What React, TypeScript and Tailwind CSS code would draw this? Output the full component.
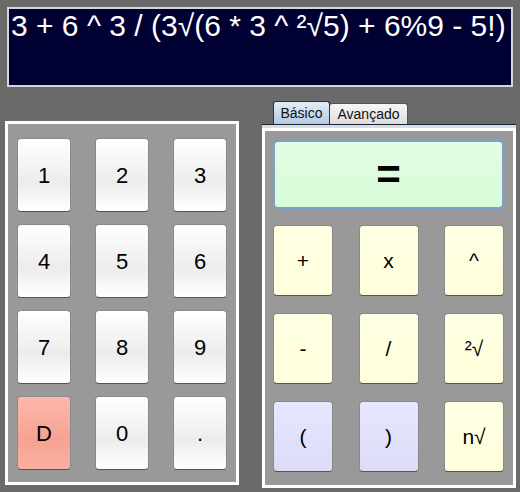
const digits = ["1", "2", "3", "4", "5", "6", "7", "8", "9", "D", "0", "."];

const ops = [
  { label: "+", kind: "y" },
  { label: "x", kind: "y" },
  { label: "^", kind: "y" },
  { label: "-", kind: "y" },
  { label: "/", kind: "y" },
  { label: "²√", kind: "y" },
  { label: "(", kind: "p" },
  { label: ")", kind: "p" },
  { label: "n√", kind: "y" },
];

const DigitKey = ({ label }: { label: string }) => (
  <div
    className={
      label === "D"
        ? "flex items-center justify-center rounded-[4px] border border-[#8a8a8a] border-b-[#555] bg-[linear-gradient(to_bottom,#fcb8ab,#f5a292_60%,#fbb0a2)] text-[22px] text-black"
        : "flex items-center justify-center rounded-[4px] border border-[#8a8a8a] border-b-[#555] bg-[linear-gradient(to_bottom,#ffffff,#ececec_60%,#ffffff)] text-[22px] text-black"
    }
  >
    {label}
  </div>
);

const OpKey = ({ label, kind }: { label: string; kind: string }) => (
  <div
    className={
      kind === "p"
        ? "flex items-center justify-center rounded-[4px] border border-[#8a8a8a] border-b-[#555] bg-[linear-gradient(to_bottom,#e6e6ff,#dcdcf8)] text-[21px] text-black"
        : "flex items-center justify-center rounded-[4px] border border-[#8a8a8a] border-b-[#555] bg-[linear-gradient(to_bottom,#ffffe4,#ffffdc)] text-[21px] text-black"
    }
  >
    {label}
  </div>
);

export default function App() {
  return (
    <div className="w-[520px] h-[492px] overflow-hidden bg-[#6a6a6a] pt-[7px] font-['Liberation_Sans',Arial,sans-serif]">
      {/* expression display */}
      <div className="mx-[7px] h-[80px] border-2 border-[#d6d6d6] bg-[#000033] px-[2px] text-[30px] leading-[34px] text-white whitespace-nowrap overflow-hidden">
        3 + 6 ^ 3 / (3√(6 * 3 ^ ²√5) + 6%9 - 5!)
      </div>

      <div className="flex items-start">
        {/* number pad */}
        <div className="ml-[5px] mt-[34px] h-[364px] w-[234px] border-[3px] border-white bg-[#999999] pl-[9px] pt-[14px]">
          <div className="grid grid-cols-[54px_54px_54px] grid-rows-[74px_74px_74px_74px] gap-x-[24px] gap-y-[12px]">
            {digits.map((d) => (
              <DigitKey key={d} label={d} />
            ))}
          </div>
        </div>

        {/* tabbed operators */}
        <div className="ml-[23px] mt-[14px] w-[254px]">
          <div className="flex items-end pl-[11px] h-[23px] text-[14px] leading-none">
            <div className="h-[23px] w-[57px] rounded-t-[3px] border border-b-0 border-[#333] bg-[linear-gradient(to_bottom,#e2ecf6,#b2cae2)] flex items-center justify-center text-[#111]">
              Básico
            </div>
            <div className="h-[21px] w-[78px] rounded-t-[3px] border border-b-0 border-l-0 border-[#555] bg-[linear-gradient(to_bottom,#f6f6f6,#dcdcdc)] flex items-center justify-center text-[#111]">
              Avançado
            </div>
          </div>
          <div className="h-px bg-[#222]" />
          <div className="h-[3px] bg-[#cfe0f0]" />
          <div className="h-[360px] border-[3px] border-white bg-[#999999] pl-[8px] pr-[9px] pt-[9px]">
            <div className="flex h-[69px] items-center justify-center rounded-[5px] border-2 border-[#7aa0d0] bg-[linear-gradient(to_bottom,#e2fde2,#d8fcd8)] text-[42px] font-bold leading-none text-black">
              =
            </div>
            <div className="mt-[16px] grid grid-cols-[60px_60px_60px] grid-rows-[71px_71px_71px] justify-between gap-y-[17px]">
              {ops.map((o) => (
                <OpKey key={o.label} label={o.label} kind={o.kind} />
              ))}
            </div>
          </div>
        </div>
      </div>
    </div>
  );
}
